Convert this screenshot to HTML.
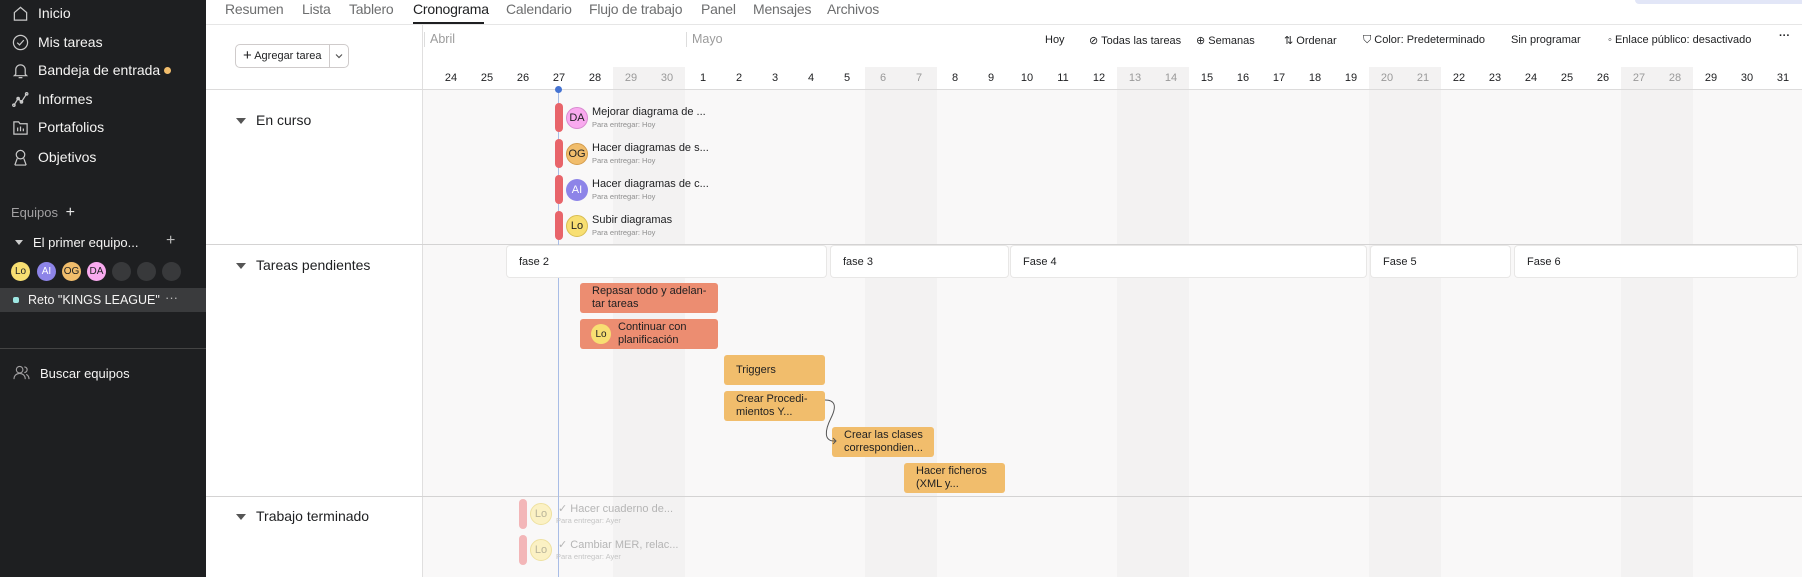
<!DOCTYPE html>
<html><head><meta charset="utf-8"><style>
*{margin:0;padding:0;box-sizing:border-box}
body{width:1802px;height:577px;overflow:hidden;font-family:"Liberation Sans",sans-serif;background:#fff;position:relative;color:#1e1f21}
.a{position:absolute;white-space:nowrap}
.sb{position:absolute;left:0;top:0;width:206px;height:577px;background:#1e1f21;color:#f5f4f3}
.sb .i{position:absolute;left:38px;font-size:14px}
.ic{position:absolute;left:12px;width:17px;height:17px}
.av{position:absolute;border-radius:50%;font-size:11px;display:flex;align-items:center;justify-content:center;color:#1e1f21}
.tab{position:absolute;top:1px;font-size:14px;color:#6d6e6f;letter-spacing:-0.2px}
.tb{position:absolute;top:34px;font-size:11px;color:#1e1f21}
.day{position:absolute;top:72px;width:36px;text-align:center;font-size:11px;color:#1e1f21}
.day.w{color:#999}
.wk{position:absolute;width:72px;background:#f3f2f2}
.ph{position:absolute;top:246px;height:31px;background:#fff;border-radius:3px;box-shadow:0 0 0 1px #e8e7e6;font-size:11px;padding:10px 0 0 12px}
.t{position:absolute;border-radius:3px;font-size:11px;line-height:13px;padding:2px 0 0 12px;color:#1e1f21}
.bar{position:absolute;width:8px;border-radius:4px;background:#e8646a}
.tt{position:absolute;font-size:11px;color:#1e1f21}
.st{position:absolute;font-size:7.5px;color:#8f8f8f}
.sec{position:absolute;left:256px;font-size:14px;color:#1e1f21}
.tri{position:absolute;left:236px;width:0;height:0;border-left:5px solid transparent;border-right:5px solid transparent;border-top:6px solid #555}
</style></head><body>

<div class="sb">
  <svg class="ic" style="top:5px" viewBox="0 0 18 18" fill="none" stroke="#c9c9c9" stroke-width="1.3"><path d="M2.5 8 9 2.5 15.5 8v8h-13z"/></svg><div class="i" style="top:5px">Inicio</div>
  <svg class="ic" style="top:34px" viewBox="0 0 18 18" fill="none" stroke="#c9c9c9" stroke-width="1.3"><circle cx="9" cy="9" r="7.5"/><path d="M5.5 9.2 8 11.5l4.5-5"/></svg><div class="i" style="top:34px">Mis tareas</div>
  <svg class="ic" style="top:62px" viewBox="0 0 18 18" fill="none" stroke="#c9c9c9" stroke-width="1.3"><path d="M4 13V8a5 5 0 0 1 10 0v5l1.5 1.5h-13zM7 16.5h4"/></svg><div class="i" style="top:62px">Bandeja de entrada <span style="display:inline-block;width:7px;height:7px;border-radius:50%;background:#f1bd6c;vertical-align:1px"></span></div>
  <svg class="ic" style="top:91px" viewBox="0 0 18 18" fill="none" stroke="#c9c9c9" stroke-width="1.3"><path d="M2 15 6.5 8 10 11.5 15.5 3"/><circle cx="2" cy="15" r="1.3"/><circle cx="6.5" cy="8" r="1.3"/><circle cx="10" cy="11.5" r="1.3"/><circle cx="15.5" cy="3" r="1.3"/></svg><div class="i" style="top:91px">Informes</div>
  <svg class="ic" style="top:119px" viewBox="0 0 18 18" fill="none" stroke="#c9c9c9" stroke-width="1.3"><path d="M2 3h5l1.5 2H16v11H2z"/><path d="M6 13V9M9 13V8M12 13v-3"/></svg><div class="i" style="top:119px">Portafolios</div>
  <svg class="ic" style="top:149px" viewBox="0 0 18 18" fill="none" stroke="#c9c9c9" stroke-width="1.3"><circle cx="9" cy="6" r="4.5"/><path d="M3 17l2.5-7M15 17l-2.5-7M3 17h12"/></svg><div class="i" style="top:149px">Objetivos</div>

  <div class="a" style="left:11px;top:204px;font-size:13px;color:#a2a0a2">Equipos <span style="color:#e6e6e6;font-size:16px;margin-left:4px">+</span></div>
  <div class="a" style="left:15px;top:240px;width:0;height:0;border-left:4px solid transparent;border-right:4px solid transparent;border-top:5px solid #ccc"></div>
  <div class="a" style="left:33px;top:235px;font-size:13px">El primer equipo...</div>
  <div class="a" style="left:166px;top:232px;font-size:16px;color:#bbb">+</div>
  <div class="av" style="left:11px;top:262px;width:19px;height:19px;background:#f8df72;font-size:10px">Lo</div>
  <div class="av" style="left:37px;top:262px;width:19px;height:19px;background:#8d84e8;font-size:10px;color:#fff">AI</div>
  <div class="av" style="left:62px;top:262px;width:19px;height:19px;background:#f1bd6c;font-size:10px">OG</div>
  <div class="av" style="left:87px;top:262px;width:19px;height:19px;background:#f9aaef;font-size:10px">DA</div>
  <div class="av" style="left:112px;top:262px;width:19px;height:19px;background:#38393b"></div>
  <div class="av" style="left:137px;top:262px;width:19px;height:19px;background:#38393b"></div>
  <div class="av" style="left:162px;top:262px;width:19px;height:19px;background:#38393b"></div>
  <div class="a" style="left:0;top:288px;width:206px;height:24px;background:#3a3b3d"></div>
  <div class="a" style="left:13px;top:297px;width:6px;height:6px;border-radius:2px;background:#9ee7e3"></div>
  <div class="a" style="left:28px;top:293px;font-size:12.5px">Reto "KINGS LEAGUE"</div>
  <div class="a" style="left:165px;top:290px;font-size:13px;color:#bbb">···</div>
  <div class="a" style="left:0;top:348px;width:206px;height:1px;background:#444"></div>
  <svg class="a" style="left:13px;top:365px;width:17px;height:15px" viewBox="0 0 18 16" fill="none" stroke="#a2a0a2" stroke-width="1.2"><circle cx="7" cy="5" r="3.5"/><path d="M1 15c0-4 3-6 6-6s6 2 6 6"/><path d="M12 2a3 3 0 0 1 0 6M14 10c2 1 3 3 3 5"/></svg>
  <div class="a" style="left:40px;top:366px;font-size:13px">Buscar equipos</div>
</div>

<!-- tabs -->
<div class="tab" style="left:225px">Resumen</div>
<div class="tab" style="left:302px">Lista</div>
<div class="tab" style="left:349px">Tablero</div>
<div class="tab" style="left:413px;color:#1e1f21">Cronograma</div>
<div class="tab" style="left:506px">Calendario</div>
<div class="tab" style="left:589px">Flujo de trabajo</div>
<div class="tab" style="left:701px">Panel</div>
<div class="tab" style="left:753px">Mensajes</div>
<div class="tab" style="left:827px">Archivos</div>
<div class="a" style="left:413px;top:22px;width:71px;height:2px;background:#1e1f21"></div>
<div class="a" style="left:206px;top:24px;width:1596px;height:1px;background:#e6e6e6"></div>
<div class="a" style="left:1635px;top:0;width:167px;height:4px;background:#e2e6f7;border-radius:0 0 0 4px"></div>

<!-- add task button -->
<div class="a" style="left:235px;top:44px;width:114px;height:24px;border:1px solid #cfcbcb;border-radius:5px"></div>
<div class="a" style="left:329px;top:44px;width:1px;height:24px;background:#cfcbcb"></div>
<div class="a" style="left:243px;top:47px;font-size:11px;color:#1e1f21"><span style="font-size:15px;vertical-align:-1px">+</span> Agregar tarea</div>
<svg class="a" style="left:335px;top:53px;width:8px;height:6px" viewBox="0 0 8 6" fill="none" stroke="#555" stroke-width="1.2"><path d="M1 1.5 4 4.5 7 1.5"/></svg>

<!-- grid background -->
<div class="a" style="left:422px;top:89px;width:1380px;height:488px;background:#f9f8f8"></div>
<div class="wk" style="left:613px;top:67px;height:510px"></div>
<div class="wk" style="left:865px;top:67px;height:510px"></div>
<div class="wk" style="left:1117px;top:67px;height:510px"></div>
<div class="wk" style="left:1369px;top:67px;height:510px"></div>
<div class="wk" style="left:1621px;top:67px;height:510px"></div>
<div class="a" style="left:422px;top:25px;width:1px;height:552px;background:#e0dfdf"></div>
<div class="a" style="left:424px;top:32px;width:1px;height:15px;background:#ddd"></div>
<div class="a" style="left:686px;top:32px;width:1px;height:15px;background:#ddd"></div>
<div class="a" style="left:430px;top:32px;font-size:12.5px;color:#9b9b9b">Abril</div>
<div class="a" style="left:692px;top:32px;font-size:12.5px;color:#9b9b9b">Mayo</div>

<!-- toolbar -->
<div class="tb" style="left:1045px">Hoy</div>
<div class="tb" style="left:1089px">⊘ Todas las tareas</div>
<div class="tb" style="left:1196px">⊕ Semanas</div>
<div class="tb" style="left:1284px">⇅ Ordenar</div>
<div class="tb" style="left:1363px">⛉ Color: Predeterminado</div>
<div class="tb" style="left:1511px">Sin programar</div>
<div class="tb" style="left:1608px">◦ Enlace público: desactivado</div>
<div class="tb" style="left:1779px;font-weight:bold;top:30px">···</div>

<!-- days -->
<div class="day" style="left:433px">24</div><div class="day" style="left:469px">25</div><div class="day" style="left:505px">26</div><div class="day" style="left:541px">27</div><div class="day" style="left:577px">28</div><div class="day w" style="left:613px">29</div><div class="day w" style="left:649px">30</div><div class="day" style="left:685px">1</div><div class="day" style="left:721px">2</div><div class="day" style="left:757px">3</div><div class="day" style="left:793px">4</div><div class="day" style="left:829px">5</div><div class="day w" style="left:865px">6</div><div class="day w" style="left:901px">7</div><div class="day" style="left:937px">8</div><div class="day" style="left:973px">9</div><div class="day" style="left:1009px">10</div><div class="day" style="left:1045px">11</div><div class="day" style="left:1081px">12</div><div class="day w" style="left:1117px">13</div><div class="day w" style="left:1153px">14</div><div class="day" style="left:1189px">15</div><div class="day" style="left:1225px">16</div><div class="day" style="left:1261px">17</div><div class="day" style="left:1297px">18</div><div class="day" style="left:1333px">19</div><div class="day w" style="left:1369px">20</div><div class="day w" style="left:1405px">21</div><div class="day" style="left:1441px">22</div><div class="day" style="left:1477px">23</div><div class="day" style="left:1513px">24</div><div class="day" style="left:1549px">25</div><div class="day" style="left:1585px">26</div><div class="day w" style="left:1621px">27</div><div class="day w" style="left:1657px">28</div><div class="day" style="left:1693px">29</div><div class="day" style="left:1729px">30</div><div class="day" style="left:1765px">31</div>

<!-- horizontal lines -->
<div class="a" style="left:206px;top:89px;width:1596px;height:1px;background:#dcdbdb"></div>
<div class="a" style="left:206px;top:244px;width:1596px;height:1px;background:#d4d3d3"></div>
<div class="a" style="left:206px;top:496px;width:1596px;height:1px;background:#d4d3d3"></div>

<!-- today line -->
<div class="a" style="left:558px;top:89px;width:1px;height:488px;background:#a9bde6"></div>
<div class="a" style="left:555px;top:86px;width:7px;height:7px;border-radius:50%;background:#4573d2"></div>

<!-- sections -->
<div class="tri" style="top:118px"></div><div class="sec" style="top:112px">En curso</div>
<div class="tri" style="top:263px"></div><div class="sec" style="top:257px">Tareas pendientes</div>
<div class="tri" style="top:514px"></div><div class="sec" style="top:508px">Trabajo terminado</div>

<!-- en curso tasks -->
<div class="bar" style="left:555px;top:103px;height:29px"></div>
<div class="av" style="left:566px;top:107px;width:22px;height:22px;background:#f9aaef;border:1px solid #d98ad0">DA</div>
<div class="tt" style="left:592px;top:106px">Mejorar diagrama de ...</div><div class="st" style="left:592px;top:120px">Para entregar: Hoy</div>
<div class="bar" style="left:555px;top:139px;height:29px"></div>
<div class="av" style="left:566px;top:143px;width:22px;height:22px;background:#f1bd6c;border:1px solid #d49c4c">OG</div>
<div class="tt" style="left:592px;top:142px">Hacer diagramas de s...</div><div class="st" style="left:592px;top:156px">Para entregar: Hoy</div>
<div class="bar" style="left:555px;top:175px;height:29px"></div>
<div class="av" style="left:566px;top:179px;width:22px;height:22px;background:#8d84e8;color:#fff">AI</div>
<div class="tt" style="left:592px;top:178px">Hacer diagramas de c...</div><div class="st" style="left:592px;top:192px">Para entregar: Hoy</div>
<div class="bar" style="left:555px;top:211px;height:29px"></div>
<div class="av" style="left:566px;top:215px;width:22px;height:22px;background:#f8df72;border:1px solid #d8bd52">Lo</div>
<div class="tt" style="left:592px;top:214px">Subir diagramas</div><div class="st" style="left:592px;top:228px">Para entregar: Hoy</div>

<!-- phases -->
<div class="ph" style="left:507px;width:319px">fase 2</div>
<div class="ph" style="left:831px;width:177px">fase 3</div>
<div class="ph" style="left:1011px;width:355px">Fase 4</div>
<div class="ph" style="left:1371px;width:139px">Fase 5</div>
<div class="ph" style="left:1515px;width:282px">Fase 6</div>

<!-- tasks -->
<div class="t" style="left:580px;top:283px;width:138px;height:30px;background:#ec8d71;padding-top:2px">Repasar todo y adelan-<br>tar tareas</div>
<div class="t" style="left:580px;top:319px;width:138px;height:30px;background:#ec8d71;padding-left:38px">Continuar con<br>planificación</div>
<div class="av" style="left:591px;top:324px;width:20px;height:20px;background:#f8df72;font-size:10px">Lo</div>
<div class="t" style="left:724px;top:355px;width:101px;height:30px;background:#f1bd6c;padding-top:9px">Triggers</div>
<div class="t" style="left:724px;top:391px;width:101px;height:30px;background:#f1bd6c">Crear Procedi-<br>mientos Y...</div>
<div class="t" style="left:832px;top:427px;width:102px;height:30px;background:#f1bd6c">Crear las clases<br>correspondien...</div>
<div class="t" style="left:904px;top:463px;width:101px;height:30px;background:#f1bd6c">Hacer ficheros<br>(XML y...</div>
<svg class="a" style="left:810px;top:395px;width:30px;height:55px" viewBox="0 0 30 55" fill="none" stroke="#555" stroke-width="1"><path d="M15 5c10 0 12 6 6 18s-8 24 5 23"/><path d="M23 43l3 3-3 3"/></svg>

<!-- done tasks -->
<div class="bar" style="left:519px;top:499px;height:30px;background:#f3b6b8"></div>
<div class="av" style="left:530px;top:503px;width:22px;height:22px;background:#fbf1c4;color:#b9b49a;border:1px solid #eee1a0">Lo</div>
<div class="tt" style="left:558px;top:502px;color:#b5b5b5">✓ Hacer cuaderno de...</div><div class="st" style="left:556px;top:516px;color:#c5c5c5">Para entregar: Ayer</div>
<div class="bar" style="left:519px;top:535px;height:30px;background:#f3b6b8"></div>
<div class="av" style="left:530px;top:539px;width:22px;height:22px;background:#fbf1c4;color:#b9b49a;border:1px solid #eee1a0">Lo</div>
<div class="tt" style="left:558px;top:538px;color:#b5b5b5">✓ Cambiar MER, relac...</div><div class="st" style="left:556px;top:552px;color:#c5c5c5">Para entregar: Ayer</div>

</body></html>
